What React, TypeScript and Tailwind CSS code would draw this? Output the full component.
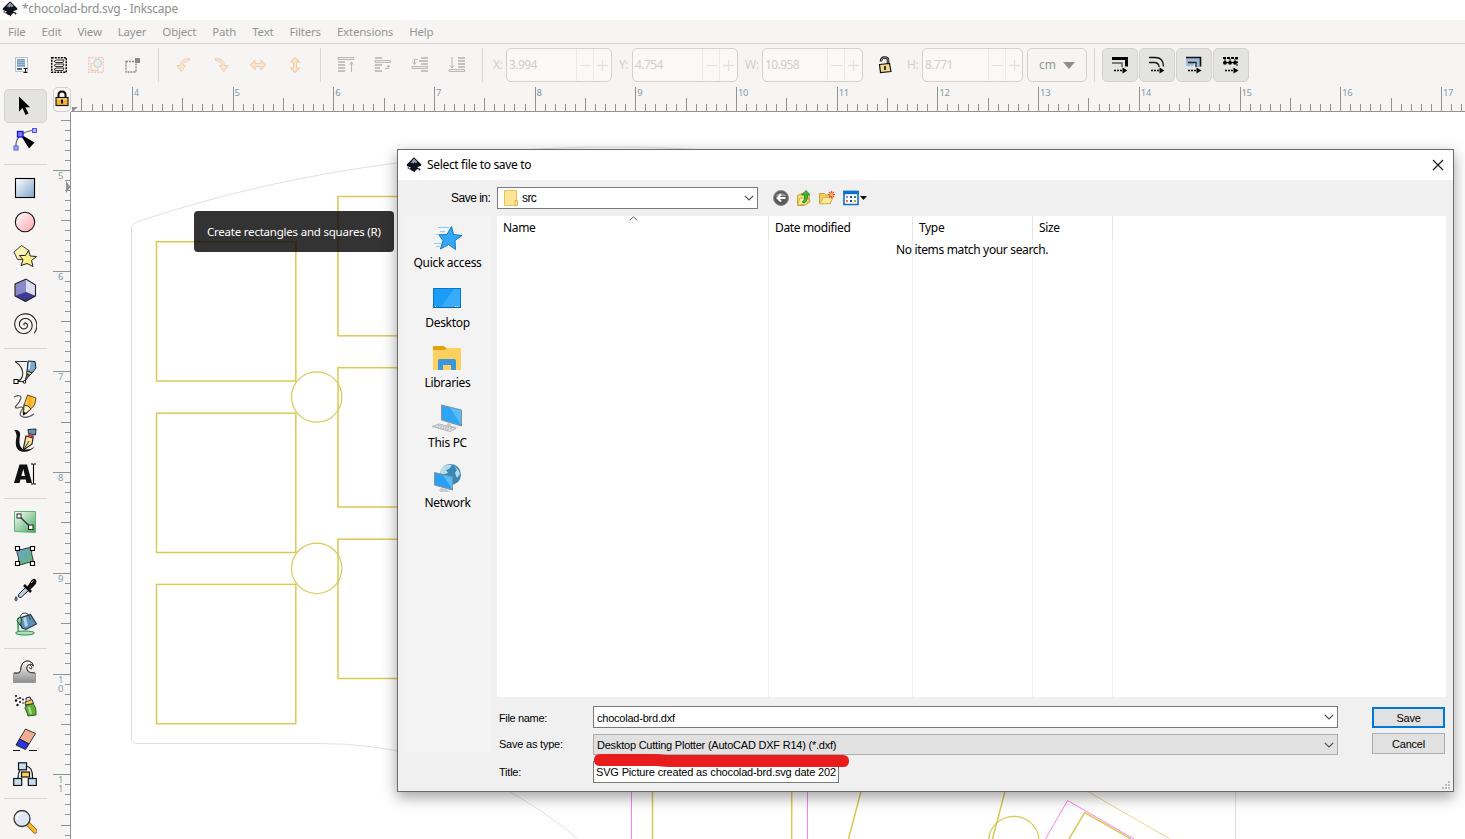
import React from "react";

type Kids = { children?: React.ReactNode };

const UI = "font-['Noto_Sans',sans-serif]";
const SYS = "font-['Liberation_Sans',sans-serif]";

function Ico({ s = 24, children }: Kids & { s?: number }) {
  return (
    <svg width={s} height={s} viewBox={`0 0 ${s} ${s}`} fill="none" className="block shrink-0">
      {children}
    </svg>
  );
}

function InkLogo() {
  return (
    <svg width="16" height="16" viewBox="0 0 16 16" className="block shrink-0">
      <path d="M8 .3 15 7q1 1.200-.4 1.900L11.500 10q-.6.600.8.900l1 .5q-.3.700-2.400.8-.4 1.400-1.700 1.600l-.7 1.700-1.300-1.500q-2-.1-2.200-1.300-2-.1-2-.9L5 10.700 1 9Q.3 8 1.200 7Z" fill="#10131a" />
      <path d="M8 1.500 11.500 5 9.800 6.300 8.400 5.300 7.200 6.700 6 5.500 4.300 6Z" fill="#8f9db5" />
      <circle cx="13.500" cy="12.600" r="1" fill="#10131a" />
      <circle cx="2.300" cy="11" r=".8" fill="#10131a" />
    </svg>
  );
}

/* ---------- command bar ---------- */

function Sep() {
  return (
    <div className="flex h-[34px] w-[14px] shrink-0 justify-center">
      <div className="h-full w-px bg-[#d9d6d3]" />
    </div>
  );
}

function Cell({ children }: Kids) {
  return <div className="flex w-[37px] shrink-0 items-center justify-center">{children}</div>;
}

function Curl({ flip }: { flip?: boolean }) {
  return (
    <Ico s={16}>
      <g transform={flip ? "matrix(-1 0 0 1 16 0)" : undefined}>
        <path d="M13.500 1.500Q5 1.500 4.500 8.500H.8L5.300 14.500 9.500 8.500H7Q7.500 4 13.500 3.500Z" fill="#fbe6d3" stroke="#f2cdab" />
      </g>
    </Ico>
  );
}

function DoubleArrow({ vertical }: { vertical?: boolean }) {
  return (
    <Ico s={16}>
      <path
        transform={vertical ? "rotate(90 8 8)" : undefined}
        d="M.5 8 5 3.500v3h6v-3L15.500 8 11 12.500v-3H5v3Z"
        fill="#fbe6d3"
        stroke="#f2cdab"
        strokeWidth="1.100"
      />
    </Ico>
  );
}

function Stack({ mode }: { mode: "top" | "up" | "down" | "bottom" }) {
  return (
    <Ico s={18}>
      <g stroke="#c3c2c0" strokeWidth="2">
        {mode === "top" && <path d="M1 6H8M1 9H8M1 12H8M1 15H8" />}
        {mode === "up" && <path d="M1 2H8M1 9H8M1 12H6M1 15H8" />}
        {mode === "down" && <path d="M10 2H17M8 5H17M10 8H17M10 15H17" />}
        {mode === "bottom" && <path d="M10 2H17M10 5H17M10 8H17M10 11H17" />}
      </g>
      <g stroke="#b9b8b6" fill="#f4eee2">
        {mode === "top" && <path d="M1 1.500H16.500V3.500H1ZM14.500 16V6.500M12.500 8.500 14.500 6 16.500 8.500" />}
        {mode === "up" && <path d="M1 4.500H16.500V6.500H1ZM11 12.500H14.500V9.500M13 11 14.500 9 16 11" />}
        {mode === "down" && <path d="M1 10.500H16.500V12.500H1ZM7 3.500H3.500V8M2 6.500 3.500 8.500 5 6.500" />}
        {mode === "bottom" && <path d="M1 13.500H16.500V15.500H1ZM4 1V11.500M2 9.500 4 12 6 9.500" />}
      </g>
    </Ico>
  );
}

function Spin({ value, wide }: { value: string; wide?: "a" | "b" | "c" }) {
  return (
    <div
      className={
        "flex h-[34px] shrink-0 items-center overflow-hidden rounded-[5px] border border-[#d5d0cc] bg-[#faf9f8] " +
        (wide === "a" ? "w-[106px]" : "w-[101px]")
      }
    >
      <span className="flex-1 pl-[2px] text-[12px] tracking-[-0.6px] text-[#d2cecb]">{value}</span>
      <span className="flex h-full w-[17px] items-center justify-center border-l border-[#edebe9]">
        <span className="h-px w-[11px] bg-[#e4e2e0]" />
      </span>
      <span className={"flex h-full items-center justify-center border-l border-[#edebe9] " + (wide === "c" ? "w-[17px]" : "w-[18px]")}>
        <svg width="11" height="11" viewBox="0 0 11 11"><path d="M0 5.500H11M5.500 0V11" stroke="#e4e2e0" strokeWidth="1.300" /></svg>
      </span>
    </div>
  );
}

function Toggle({ children }: Kids) {
  return (
    <div className="flex h-[34px] w-[36px] shrink-0 items-center justify-center rounded-[5px] border border-[#d5d0cc] bg-[#e3e4df] pb-px">
      {children}
    </div>
  );
}

function ArrowDots() {
  return (
    <g>
      <path d="M3 14.500H12" stroke="#000" strokeWidth="1.400" strokeDasharray="2 1" />
      <path d="M11.500 11.500 16.500 14.500 11.500 17.500Z" fill="#000" />
    </g>
  );
}

function CommandBar() {
  return (
    <div className="flex h-[43px] shrink-0 items-center bg-[#f6f5f4] pb-px pl-[3px]">
      <Cell>
        <Ico s={18}>
          <path d="M2.500 1.500h12v14h-12z" fill="#fdfdfd" stroke="#b9c2ca" />
          <path d="M4 3h8v8H4z" fill="#9dbbdd" />
          <path d="M4 3.500h7M4 5.500h8M4 7.500h8M4 9.500h8" stroke="#7c9fc6" />
          <path d="M4 13h5" stroke="#486d98" strokeWidth="2" />
          <path d="M10.500 12.500h4M10.500 16.500h4M12.500 12v4" stroke="#111" />
        </Ico>
      </Cell>
      <Cell>
        <Ico s={16}>
          <rect x=".75" y=".75" width="14.500" height="14.500" stroke="#000" strokeWidth="1.500" strokeDasharray="2 1" />
          <path d="M3 4.500 5 3H13L12 5.500H5ZM3 8.500 5 7H13L12 9.500H5ZM3 12.500 5 11H13L12 13.500H5Z" fill="#eee" stroke="#333" />
        </Ico>
      </Cell>
      <Cell>
        <Ico s={16}>
          <rect x=".75" y=".75" width="14.500" height="14.500" stroke="#f3c3c3" strokeWidth="1.300" strokeDasharray="2 1" />
          <rect x="3" y="6.500" width="7" height="7" fill="#fbf2d9" stroke="#d9d2c2" />
          <circle cx="9.700" cy="6.300" r="4" fill="#e8edf0" stroke="#c5cbcd" />
        </Ico>
      </Cell>
      <Cell>
        <Ico s={16}>
          <rect x="1" y="4.500" width="10" height="10.500" stroke="#888" strokeWidth="1.300" strokeDasharray="2 1" />
          <rect x="10" y="1" width="5" height="5" fill="#8a8a8a" />
        </Ico>
      </Cell>
      <Sep />
      <Cell><Curl /></Cell>
      <Cell><Curl flip /></Cell>
      <Cell><DoubleArrow /></Cell>
      <Cell><DoubleArrow vertical /></Cell>
      <Sep />
      <Cell><Stack mode="top" /></Cell>
      <Cell><Stack mode="up" /></Cell>
      <Cell><Stack mode="down" /></Cell>
      <Cell><Stack mode="bottom" /></Cell>
      <Sep />
      <span className="ml-[4px] w-[13px] text-[12px] tracking-[-0.5px] text-[#d2cecb]">X:</span>
      <Spin value="3.994" wide="a" />
      <span className="ml-[7px] w-[13px] text-[12px] tracking-[-0.5px] text-[#d2cecb]">Y:</span>
      <Spin value="4.754" wide="a" />
      <span className="ml-[7px] w-[17px] text-[12px] tracking-[-0.5px] text-[#d2cecb]">W:</span>
      <Spin value="10.958" wide="b" />
      <div className="flex w-[44px] justify-center">
        <Ico s={18}>
          <path d="M5 5.500Q5 1.500 8.500 1.500 12.500 1.500 12 5V9" stroke="#111" strokeWidth="2.600" />
          <path d="M5 5.500Q5 1.500 8.500 1.500 12.500 1.500 12 5V9" stroke="#c9c9c9" strokeWidth=".7" />
          <path d="M3.500 8.500 13.500 7.500 15 15.500 4.500 16.500Z" fill="#f0d98a" stroke="#111" strokeWidth="1.200" />
          <path d="M9 10v4" stroke="#111" strokeWidth="1.700" />
        </Ico>
      </div>
      <span className="w-[15px] text-[12px] tracking-[-0.5px] text-[#d2cecb]">H:</span>
      <Spin value="8.771" wide="c" />
      <div className="ml-1 flex h-[34px] w-[60px] items-center justify-between rounded-[5px] border border-[#d5d0cc] bg-[#f6f5f4] pr-[11px] pl-[11px]">
        <span className="text-[12px] text-[#929595]">cm</span>
        <svg width="12" height="7" viewBox="0 0 12 7"><path d="M0 0H12L6 7Z" fill="#8b8e8f" /></svg>
      </div>
      <Sep />
      <div className="ml-px flex gap-px">
        <Toggle>
          <Ico s={18}>
            <path d="M1 2.500H15.500V10.500" stroke="#000" strokeWidth="3" />
            <path d="M1 7H11V11" stroke="#555" strokeWidth="1.400" />
            <ArrowDots />
          </Ico>
        </Toggle>
        <Toggle>
          <Ico s={18}>
            <path d="M1 1.500H7Q15.500 1.500 15.500 10.500M1 6.500H6Q11 6.500 11 11" stroke="#111" strokeWidth="1.300" />
            <ArrowDots />
          </Ico>
        </Toggle>
        <Toggle>
          <Ico s={18}>
            <path d="M1 1.500H15.500V11H11V6.500H9V10H1Z" fill="#9ebbd9" />
            <path d="M1 1.500H15.500V10.500" stroke="#111" strokeWidth="1.600" />
            <path d="M3 6.500H11V11" stroke="#222" strokeWidth="1.300" />
            <ArrowDots />
          </Ico>
        </Toggle>
        <Toggle>
          <Ico s={18}>
            <path d="M1 2H16" stroke="#000" strokeWidth="2" strokeDasharray="3 1" />
            <path d="M3 3V6M8 3V6M13 3V6" stroke="#000" />
            <path d="M1 6.500H16" stroke="#000" strokeWidth="1.200" />
            <g fill="#000"><circle cx="3" cy="6.800" r="1.900" /><circle cx="8" cy="6.800" r="1.900" /><circle cx="13" cy="6.800" r="1.900" /></g>
            <path d="M15 2V10" stroke="#000" strokeDasharray="2 1" />
            <ArrowDots />
          </Ico>
        </Toggle>
      </div>
    </div>
  );
}

/* ---------- toolbox ---------- */

function Tool({ active, children }: Kids & { active?: boolean }) {
  return (
    <div
      className={
        "flex h-[34px] w-[43px] shrink-0 items-center justify-center rounded-[5px] border pr-px " +
        (active ? "border-[#d5d0cc] bg-[#e3e4df]" : "border-transparent")
      }
    >
      {children}
    </div>
  );
}

function ToolSep() {
  return (
    <div className="flex h-[14px] w-[43px] shrink-0 items-center">
      <div className="h-px w-full bg-[#d9d6d3]" />
    </div>
  );
}

function spiralPath() {
  const steps = 90;
  const turns = 2.7;
  const pts: string[] = [];
  for (let i = 0; i <= steps; i++) {
    const t = i / steps;
    const a = 0.72 - t * turns * 2 * Math.PI;
    const r = 12.8 * (1 - t);
    pts.push(`${(11.600 + r * Math.cos(a)).toFixed(2)} ${(12.800 + r * Math.sin(a)).toFixed(2)}`);
  }
  return "M" + pts.join("L");
}

function Toolbox() {
  return (
    <div className="flex w-[53px] shrink-0 flex-col bg-[#f6f5f4] pt-[2px] pl-[4px]">
      <svg width="0" height="0" className="absolute">
        <defs>
          <linearGradient id="blue" x1="0" y1="0" x2="1" y2="1"><stop stopColor="#fff" /><stop offset="1" stopColor="#7fa6cc" /></linearGradient>
          <linearGradient id="pink" x1="0" y1="0" x2="1" y2="1"><stop stopColor="#fff" /><stop offset="1" stopColor="#ffa3ac" /></linearGradient>
          <linearGradient id="green" x1="0" y1="0" x2="1" y2="1"><stop stopColor="#fff" /><stop offset="1" stopColor="#42a85c" /></linearGradient>
          <linearGradient id="steel" x1="0" y1="0" x2="0" y2="1"><stop stopColor="#fff" /><stop offset="1" stopColor="#8c8c8c" /></linearGradient>
          <linearGradient id="mesh" x1="0" y1="0" x2="1" y2="1"><stop stopColor="#6f9fd0" /><stop offset="1" stopColor="#5cba74" /></linearGradient>
          <linearGradient id="gold" x1="0" y1="0" x2="1" y2="0"><stop stopColor="#fff2a8" /><stop offset=".5" stopColor="#f8a81c" /><stop offset="1" stopColor="#f6dc62" /></linearGradient>
        </defs>
      </svg>
      <Tool active>
        <Ico><path d="M6 2.500V17.500L9.500 14 12.500 21 15.500 19.500 12.300 13.200H17Z" fill="#000" /></Ico>
      </Tool>
      <Tool>
        <Ico>
          <path d="M3 19Q2 5 21 2" stroke="#666" strokeWidth="1.200" />
          <path d="M7 6 21.500 14.500 16 20.500Z" fill="#000" />
          <rect x="4.500" y="3.500" width="5.500" height="5.500" fill="#7a7af5" stroke="#1414e6" strokeWidth="1.300" />
          <rect x="1" y="18" width="4" height="4" fill="#aab2ff" stroke="#5252f0" />
          <rect x="19.500" y=".5" width="4" height="4" fill="#aab2ff" stroke="#5252f0" />
        </Ico>
      </Tool>
      <ToolSep />
      <Tool><Ico><rect x="2.500" y="2.500" width="19" height="19" fill="url(#blue)" stroke="#000" strokeWidth="1.100" /></Ico></Tool>
      <Tool><Ico><circle cx="12" cy="12" r="9.700" fill="url(#pink)" stroke="#111" strokeWidth="1.100" /></Ico></Tool>
      <Tool>
        <Ico>
          <path d="M8.500 1.500 16 6.500 13 15.500H4.500L1 8Z" fill="#fbf3b4" stroke="#444" />
          <path d="M15.500 6.500 17.200 12 23.500 12.500 18.500 16.500 20 22.500 14 19.500 8 21.500 10 15.800 6.500 11.500 12.500 11.500Z" fill="#fdf08a" stroke="#222" strokeLinejoin="round" />
        </Ico>
      </Tool>
      <Tool>
        <Ico>
          <path d="M2 6 13 1 22.500 7V18L12.500 23.500 2 18Z" fill="#6d6dae" />
          <path d="M2 6 13 1V14L2 18Z" fill="#8a8acb" />
          <path d="M13 1 22.500 7V18L13 14Z" fill="#dcdcf3" />
          <path d="M2 18 13 14 22.500 18 12.500 23.500Z" fill="#3c3c94" />
          <path d="M2 6 13 1 22.500 7V18L12.500 23.500 2 18Z" stroke="#222" strokeWidth="1.100" />
        </Ico>
      </Tool>
      <Tool>
        <Ico><path d={spiralPath()} stroke="#222" strokeWidth="1.100" /></Ico>
      </Tool>
      <ToolSep />
      <Tool>
        <Ico>
          <path d="M2 1.500H14M2 1.500Q11 7 9.500 16 8 21 3 21.500H11" stroke="#333" strokeWidth="1.100" />
          <path d="M15 1 22 1.500 23 8 19 13 14 11Z" fill="#79a9cf" stroke="#16242f" />
          <path d="M17 2 16 9" stroke="#e6f3fb" strokeWidth="1.500" />
          <path d="M14 11 19 13 17 15 13.500 13.500Z" fill="#f4e08c" stroke="#222" />
          <path d="M14 14 16.500 15.500 12 21Z" fill="#777" stroke="#222" />
          <rect x="1" y="19.500" width="4" height="4" fill="#fff" stroke="#000" />
          <circle cx="11.500" cy="22" r="1.300" fill="#fff" stroke="#000" />
        </Ico>
      </Tool>
      <Tool>
        <Ico>
          <path d="M1 3Q8 0 8 4 7 8 3 12 1 14 5 14 9 12 10 14 5 21 9 22.500 14 25 21 20" stroke="#555" strokeWidth="1.200" />
          <path d="M14.500 1 23 4 21.500 11 13 20 10 19.500 11 11Z" fill="url(#gold)" stroke="#6b4a0c" />
          <path d="M11 11 15 12 18 15 10.500 21Z" fill="#fdf4c8" stroke="#333" />
          <path d="M10.300 17.500 13 19 10 21.500Z" fill="#111" />
        </Ico>
      </Tool>
      <Tool>
        <Ico>
          <path d="M1 2Q8 1 7 8 5 18 10 21 16 23 22 18.500 15 26 7 23 1 20 3.500 9 4 4 1 2Z" fill="#111" />
          <path d="M13 8 20 10 19 16 11 21.500 10.500 20Z" fill="#fbe29d" stroke="#222" strokeWidth="1.200" />
          <path d="M15 6.800 21 8.800" stroke="#d3332e" strokeWidth="2" />
          <path d="M15 1.500 23 1 22.500 7 15.500 5.500Z" fill="#6195be" stroke="#1c2c3a" />
          <path d="M11 21 16 13" stroke="#333" />
        </Ico>
      </Tool>
      <Tool>
        <Ico>
          <path d="M1 21 6.500 2.500H14L19 21H13.500L12.800 17.500H7.500L6.500 21ZM8.300 14H12L10.300 7Z" fill="#111" fillRule="evenodd" />
          <path d="M18 2H20Q20.500 2 20.500 3V21Q20.500 22 20 22H18M23 2H21M23 22H21" stroke="#000" strokeWidth="1.100" />
        </Ico>
      </Tool>
      <ToolSep />
      <Tool>
        <Ico>
          <path d="M1.500 1.500H22.500V22.500L1.500 21.500Z" fill="url(#green)" stroke="#5fb374" />
          <path d="M6 6 17.500 17" stroke="#333" strokeWidth="1.300" />
          <rect x="4" y="4" width="4" height="4" fill="#fff" stroke="#222" />
          <rect x="15.500" y="15" width="4.500" height="4.500" fill="#fff" stroke="#222" />
        </Ico>
      </Tool>
      <Tool>
        <Ico>
          <path d="M4.500 4.500C9 8 15 1.500 19.500 4.500 16.500 10 22 15 19.500 19.500 14 16 10 23 4.500 19.500 8 14 2 9 4.500 4.500Z" fill="url(#mesh)" stroke="#333" />
          <path d="M2.500 2.500h4v4h-4zM17.500 2.500h4v4h-4zM2.500 17.500h4v4h-4zM17.500 17.500h4v4h-4z" fill="#fff" stroke="#000" strokeWidth="1.100" />
        </Ico>
      </Tool>
      <Tool>
        <Ico>
          <path d="M13 9 16 12 8 19.500 5.500 19 5.500 16.500Z" fill="#b9d1e6" stroke="#222" />
          <path d="M11 7 18 14" stroke="#000" strokeWidth="2.600" />
          <path d="M14 9 18 3Q21-1 23 2 24.500 5 21 8L17 12Z" fill="#111" />
          <path d="M18 5 20.500 2.500" stroke="#aaa" />
          <path d="M3 18.500Q5.500 22 3 23 .8 22 3 18.500Z" fill="#668bb0" stroke="#334" strokeWidth=".8" />
        </Ico>
      </Tool>
      <Tool>
        <Ico>
          <path d="M5.500 7Q4.500 12 5.500 20" stroke="#56b074" strokeWidth="2" />
          <ellipse cx="12" cy="21" rx="9.500" ry="2" fill="#aee2b8" stroke="#2f8a4e" />
          <path d="M5 6.500 17.500 2.500 23.500 12 13 17.500 9 16Z" fill="#5e91b8" stroke="#1d3140" strokeWidth="1.100" />
          <path d="M10 6 12 15 15 13.500 13 5Z" fill="#b4d2e4" />
          <path d="M7 5Q9-1 15 2L17.500 8" stroke="#444" />
          <path d="M4 8.500 6.500 5 8.500 7 7.500 14Z" fill="#7ed091" stroke="#222" strokeWidth=".8" />
        </Ico>
      </Tool>
      <ToolSep />
      <Tool>
        <Ico>
          <path d="M.5 22.500V13H6Q8 11 8 7 10 0 16 1 20 2 20.500 6 18 2.500 15 5 12.500 8 15 11 17 13 22.500 13V22.500Z" fill="url(#steel)" stroke="#999" />
          <path d="M1 13H6Q8 11 8 7 10 0 16 1 20 2 20.500 6 18 3 15 5 12 8 15 11.500 17 13 22 13" stroke="#333" />
          <path d="M17 5Q20 7 18.500 9 16 9 16.500 7" stroke="#444" />
        </Ico>
      </Tool>
      <Tool>
        <Ico>
          <path d="M13 11 20 9.500Q23.500 13 23 21L15 22Q14 18 12 14Z" fill="#64ad38" stroke="#2f6417" />
          <path d="M16 13 18 20" stroke="#b8e39a" strokeWidth="2" />
          <path d="M12 8 19 5.500 20.500 9.500 12.500 11Z" fill="#f3c95b" stroke="#333" />
          <path d="M13 6.500V4L17 3 18 6" fill="#ddd" stroke="#222" />
          <g fill="#111"><circle cx="3" cy="2" r="1.100" /><circle cx="7" cy="4" r="1" /><circle cx="3" cy="6.500" r="1.200" /><circle cx="7" cy="8" r="1" /><circle cx="4.500" cy="11" r="1.200" /><circle cx="10" cy="5.500" r=".9" /><circle cx="10" cy="9" r=".8" /><circle cx="5" cy="4.500" r=".7" /></g>
        </Ico>
      </Tool>
      <Tool>
        <Ico>
          <path d="M12.500 1 22.500 5.500 16 16 6.500 11Z" fill="#f1ae94" stroke="#333" />
          <path d="M6.500 11 16 16 12.500 21.500 3 17Z" fill="#2b35e0" stroke="#222" />
          <path d="M0 22.500H7M16 22.500H24" stroke="#111" strokeWidth="1.100" />
        </Ico>
      </Tool>
      <Tool>
        <Ico>
          <path d="M7 8Q5 11 5 16M13 4Q20 5 19.500 16" stroke="#111" strokeWidth="1.200" />
          <rect x="5.500" y=".8" width="8" height="7" fill="#c8dcef" stroke="#111" strokeWidth="1.200" />
          <rect x="8.500" y="10" width="8" height="5" fill="#fbd04c" stroke="#111" strokeWidth="1.200" />
          <rect x=".7" y="16.500" width="8" height="7" fill="#c8dcef" stroke="#111" strokeWidth="1.200" />
          <rect x="15.300" y="16.500" width="8" height="7" fill="#c8dcef" stroke="#111" strokeWidth="1.200" />
        </Ico>
      </Tool>
      <ToolSep />
      <Tool>
        <Ico>
          <path d="M15.500 14.500 22 21" stroke="#8a5a10" strokeWidth="5" strokeLinecap="round" />
          <path d="M16 15 22 21" stroke="#f8b632" strokeWidth="3.600" strokeLinecap="round" />
          <circle cx="9" cy="8.500" r="8" fill="#dce7f2" stroke="#333" strokeWidth="1.300" />
          <path d="M4 9Q4 4 9 3.500" stroke="#fff" strokeWidth="2" />
        </Ico>
      </Tool>
    </div>
  );
}

/* ---------- rulers ---------- */

const STEP = 100.7;

function TopRuler() {
  const ticks: React.ReactNode[] = [];
  for (let i = -5; i < 134; i++) {
    const x = Math.floor(132.3 - 71 + (i * STEP) / 10) + 0.5;
    const top = i % 10 === 0 ? 0 : Math.abs(i % 10) === 5 ? 11 : 17;
    ticks.push(<path key={i} d={`M${x} ${top}V24`} stroke="#8f9293" />);
  }
  return (
    <svg width="1394" height="25" className="block shrink-0 bg-[#f6f5f4]">
      {ticks}
      <path d="M0 24.500H1394" stroke="#8f9293" />
      <path d="M1 20H7L2 24.500H1Z" fill="#8f9293" />
      {Array.from({ length: 14 }, (_, n) => (
        <text key={n} x={62.800 + n * STEP} y="9" fontSize="9.500" letterSpacing="-0.4" fill="#8798a8" className={UI}>
          {n + 4}
        </text>
      ))}
    </svg>
  );
}

function SideRuler() {
  const ticks: React.ReactNode[] = [];
  for (let i = -5; i < 67; i++) {
    const y = Math.floor(170.500 - 112 + (i * STEP) / 10) + 0.5;
    const left = i % 10 === 0 ? 0 : Math.abs(i % 10) === 5 ? 8 : 12;
    ticks.push(<path key={i} d={`M${left} ${y}H17`} stroke="#8f9293" />);
  }
  return (
    <svg width="18" height="727" className="block shrink-0 bg-[#f6f5f4]">
      {ticks}
      <path d="M17.500 0V727" stroke="#8f9293" />
      <path d="M13 69 17.500 75 13 81Z" fill="#8f9293" />
      {Array.from({ length: 7 }, (_, n) =>
        String(n + 5).split("").map((d, k) => (
          <text key={`${n}-${k}`} x="5" y={67 + n * STEP + k * 9} fontSize="9.500" fill="#8798a8" className={UI}>
            {d}
          </text>
        ))
      )}
    </svg>
  );
}

function LockBox() {
  return (
    <div className="flex h-[25px] w-[18px] shrink-0 items-center justify-center rounded-[4px] border border-[#d5d0cc] bg-[#f6f5f4] pb-[2px]">
      <svg width="14" height="17" viewBox="0 0 14 17" className="block shrink-0" fill="none">
        <path d="M3.500 8V5Q3.500 1.500 7 1.500 10.500 1.500 10.500 5V8" stroke="#111" strokeWidth="2" />
        <rect x="1" y="7.500" width="12" height="8" fill="#f2b430" stroke="#111" strokeWidth="1.100" />
        <path d="M2 9H12" stroke="#fae08a" />
        <path d="M7 9.500V13.500" stroke="#111" strokeWidth="2" />
      </svg>
    </div>
  );
}

/* ---------- drawing canvas ---------- */

function Drawing() {
  return (
    <svg width="1394" height="727" viewBox="71 112 1394 727" className="block bg-white" fill="none">
      <g stroke="#e1e1e1">
        <path d="M508 791Q420 743.500 320 743.500H138Q131.500 743.500 131.500 738V229Q131.500 224 138 221.500 262 180 397 163 520 146 620 147 680 147 722 152M508 791Q545 811 578 839M1235.500 791V839" />
      </g>
      <g stroke="#d9c954" strokeWidth="1.500">
        <rect x="156.500" y="241.700" width="139.300" height="139.300" />
        <rect x="156.500" y="413.200" width="139.300" height="139.300" />
        <rect x="156.500" y="584.400" width="139.300" height="139.300" />
        <rect x="338" y="196.500" width="139.300" height="139.300" />
        <rect x="338" y="367.700" width="139.300" height="139.300" />
        <rect x="338" y="539.200" width="139.300" height="139.300" />
        <circle cx="316.700" cy="397" r="25.200" strokeWidth="1.200" />
        <circle cx="316.700" cy="568.300" r="25.200" strokeWidth="1.200" />
        <path d="M652.500 780V839M791.700 780V839M864 780 848.500 839M1008 780 992.500 839M1069 839 1084.700 812.500 1131 839" />
        <circle cx="1013.800" cy="841.500" r="25.200" strokeWidth="1.200" />
        <path d="M1080 787 1170 839" strokeWidth=".7" />
      </g>
      <path d="M631.500 780V839M807.500 780V839M1045.500 839 1067.600 800.500 1134 839" stroke="#ff80f0" />
    </svg>
  );
}

/* ---------- save dialog ---------- */

function Place({ label, children }: Kids & { label: string }) {
  return (
    <div className="flex h-[60px] w-full flex-col items-center">
      <div className="flex h-[32px] items-center pr-[2px]">{children}</div>
      <span className="mt-px text-[12px] leading-[16px] tracking-[-0.3px]">{label}</span>
    </div>
  );
}

function Places() {
  return (
    <div className="flex h-[536px] w-[87px] shrink-0 flex-col items-center bg-[#f3f3f3] pt-[6px]">
      <Place label="Quick access">
        <Ico s={32}>
          <path d="M7 5.500H18M9 9.500H14M5 12.500H11M3 21.500H10M5 24.500H9" stroke="#8ccdf5" />
          <path d="M20.500 4.500 22.500 12.500 31 13.500 24 18.500 24.500 27.500 17.500 22.500 9.500 27 12 18.500 8 13 16 12.500Z" fill="#35a8f5" stroke="#0b78c8" />
        </Ico>
      </Place>
      <Place label="Desktop">
        <Ico s={32}>
          <rect x="2.500" y="6.500" width="27" height="19" fill="#1b9df8" stroke="#0874c4" />
          <path d="M29 7V25H10L23 7Z" fill="#38acfb" />
          <path d="M3 25.500H29" stroke="#0b65ab" />
          <path d="M4 24.500H5M24 24.500H25M26 24.500H27" stroke="#fff" />
        </Ico>
      </Place>
      <Place label="Libraries">
        <Ico s={32}>
          <path d="M2 4H13L15 6H30V28H2Z" fill="#e0a10c" />
          <path d="M2 8H14L16 6H30V28H2Z" fill="#fed05d" />
          <path d="M7 28V19Q7 17 9 17H23Q25 17 25 19V28H20V23H12V28Z" fill="#3b96df" />
        </Ico>
      </Place>
      <Place label="This PC">
        <Ico s={32}>
          <path d="M10.500 3 30.500 8V24L10.500 18Z" fill="#2ea4f5" stroke="#84939b" />
          <path d="M19 5.500 30 8.500V23Z" fill="#58bbfb" />
          <path d="M17 21 20 22V24L27 25 22 26.500 14 24.500Z" fill="#c6cbce" />
          <path d="M1 24.500 8 22 25 26.500 19 29.500Z" fill="#e3e5e6" stroke="#a3a8ab" strokeWidth=".8" />
          <path d="M4 24.500 18 28M7 23.500 21 27" stroke="#a3a8ab" strokeDasharray="1.500 1" />
        </Ico>
      </Place>
      <Place label="Network">
        <Ico s={32}>
          <circle cx="19.500" cy="12.500" r="10.500" fill="#3a86b5" />
          <path d="M12 5Q16 2 21 3L18 7 15 8 17 11 10 13 9 9ZM23 4Q28 7 29 12L26 16 24 11 26 8Z" fill="#b9dcea" />
          <path d="M3.500 10.500 21.500 15V28L3.500 23Z" fill="#29a0f3" stroke="#7d9099" />
          <path d="M12 13 21 15.500V27Z" fill="#5bbcfb" />
          <path d="M10 26 16 27.500 19 30H10L8 28.500Z" fill="#c6cbce" />
        </Ico>
      </Place>
    </div>
  );
}

function Chevron() {
  return (
    <svg width="10" height="6" viewBox="0 0 10 6" fill="none" className="block shrink-0">
      <path d="M.8.800 5 5 9.200.800" stroke="#505050" strokeWidth="1.200" />
    </svg>
  );
}

function Column({ w, title }: { w: string; title: string }) {
  return (
    <div className={"flex h-full shrink-0 flex-col " + w}>
      <div className="flex h-[24px] items-center border-r border-[#e5e5e5] pl-[6px] text-[12px] tracking-[-0.35px]">{title}</div>
      <div className="flex-1 border-r border-[#e8f1fa]" />
    </div>
  );
}

function SaveDialog() {
  return (
    <div className={"absolute top-[149px] left-[397px] flex h-[643px] w-[1057px] flex-col border border-[#6b6b6b] bg-[#f0f0f0] text-black shadow-[0_5px_14px_rgba(0,0,0,0.38)] " + UI}>
      <div className="flex h-[30px] shrink-0 items-center bg-white pr-[9px] pl-[8px]">
        <InkLogo />
        <span className="ml-[5px] flex-1 text-[12px] tracking-[-0.33px]">Select file to save to</span>
        <svg width="12" height="12" viewBox="0 0 12 12" className="mb-px"><path d="M1 1 11 11M11 1 1 11" stroke="#111" strokeWidth="1.100" /></svg>
      </div>

      <div className="flex h-[36px] shrink-0 items-center pl-[53px]">
        <span className={"w-[46px] text-[12px] tracking-[-0.5px] " + SYS}>Save in:</span>
        <div className="flex h-[22px] w-[261px] items-center border border-[#7a7a7a] bg-white pr-[3px] pl-[6px]">
          <svg width="14" height="16" viewBox="0 0 14 16" fill="none">
            <path d="M.5.500H12.500V15.500H.5Z" fill="#ffe493" stroke="#e9c35a" />
            <path d="M11 10.500H13.500V15.500H11Z" fill="#ffe493" stroke="#e0b544" />
          </svg>
          <span className={"ml-[4px] flex-1 text-[12px] tracking-[-0.6px] " + SYS}>src</span>
          <Chevron />
        </div>
        <div className="ml-[15px] flex items-center gap-[7px]">
          <Ico s={16}>
            <circle cx="8" cy="8" r="7.500" fill="#5a5a5a" stroke="#8c8c8c" />
            <path d="M2 6Q8 0 14 6Z" fill="#999" />
            <path d="M12.500 8H5M8 4.500 4.500 8 8 11.500" stroke="#fff" strokeWidth="2" />
          </Ico>
          <Ico s={16}>
            <path d="M1.500 5.500 6 3.500H12.500L14 12 8 15.500H1.500Z" fill="#f8dc7c" stroke="#cf9f31" />
            <path d="M1.500 15 4 8H13L11 14Z" fill="#fdeea9" stroke="#d9ae45" />
            <path d="M6 12Q9 11 8.500 5H5.500L10 .500 14 5H11.500Q12 11 8 13Z" fill="#3eb53a" stroke="#16801a" strokeWidth=".8" />
          </Ico>
          <Ico s={16}>
            <path d="M.5 3.500H5L7 5H11.500V13.500H.5Z" fill="#f5cf63" stroke="#cf9f31" />
            <path d="M1 14 4 7.500H14L11 13.500Z" fill="#fdeaa0" stroke="#d9ae45" />
            <path d="M12.500 1V8.500M9 4.500H16M10 2 15 7M15 2 10 7" stroke="#f0502a" strokeWidth="1.200" />
            <circle cx="12.500" cy="4.500" r="1.600" fill="#ffc46a" />
          </Ico>
          <div className="ml-px flex items-center gap-px">
            <Ico s={16}>
              <path d="M1 1.500H15V14.500H1Z" fill="#fff" stroke="#0f6fd0" strokeWidth="1.600" />
              <path d="M.3 2.500H15.700" stroke="#0f6fd0" strokeWidth="3.400" />
              <path d="M3 11H5" stroke="#ef6a57" strokeWidth="2" />
              <path d="M3 7H5" stroke="#8d8dbd" strokeWidth="2" />
              <path d="M7 7H9M7 11H9" stroke="#1c4fa8" strokeWidth="2" />
              <path d="M11 7H13" stroke="#2a9a3c" strokeWidth="2" />
              <path d="M11 11H13" stroke="#d0a31c" strokeWidth="2" />
            </Ico>
            <svg width="7" height="4" viewBox="0 0 7 4"><path d="M0 0H7L3.500 4Z" fill="#111" /></svg>
          </div>
        </div>
      </div>

      <div className="flex gap-[6px] pl-[6px]">
        <Places />
        <div className="flex w-[949px] flex-col">
          <div className="relative flex h-[481px] bg-white">
            <Column w="w-[272px]" title="Name" />
            <Column w="w-[144px]" title="Date modified" />
            <Column w="w-[120px]" title="Type" />
            <Column w="w-[80px]" title="Size" />
            <svg width="9" height="5" viewBox="0 0 9 5" fill="none" className="absolute top-0 left-[132px]">
              <path d="M.8 4.200 4.500.800 8.200 4.200" stroke="#666" />
            </svg>
            <span className="absolute top-[26px] left-[399px] text-[12px] leading-[16px] tracking-[-0.35px] whitespace-nowrap">No items match your search.</span>
          </div>

          <div className={"flex pt-[9px] text-[11px] tracking-[-0.22px] " + SYS}>
            <div className="flex w-[841px] shrink-0 flex-col">
              <div className="flex items-center">
                <span className="w-[96px] pt-[2px] pl-[2px] tracking-[-0.35px]">File name:</span>
                <div className="flex h-[22px] w-[745px] items-center justify-between border border-[#7a7a7a] bg-white pr-[3px] pl-[3px]">
                  <span className="pt-[2px]">chocolad-brd.dxf</span>
                  <Chevron />
                </div>
              </div>
              <div className="mt-[6px] flex items-center">
                <span className="w-[96px] pl-[2px]">Save as type:</span>
                <div className="flex h-[21px] w-[745px] items-center justify-between border border-[#adadad] bg-[#e1e1e1] pr-[3px] pl-[3px]">
                  <span className="pt-px">Desktop Cutting Plotter (AutoCAD DXF R14) (*.dxf)</span>
                  <Chevron />
                </div>
              </div>
              <div className="relative mt-[6px] flex items-center">
                <span className="w-[96px] pl-[2px]">Title:</span>
                <div className="flex h-[22px] w-[246px] items-center border border-[#7a7a7a] bg-white pl-[2px] whitespace-nowrap">
                  <span className="tracking-[-0.16px]">SVG Picture created as chocolad-brd.svg date 202</span>
                </div>
                <svg width="256" height="14" viewBox="0 0 256 14" className="absolute -top-[7px] left-[97px]">
                  <path d="M6 0H60Q66 0 72 1H249Q255 1.500 255 7 255 13 249 13H80Q70 13 64 12H6Q0 12 0 6 0 0 6 0Z" fill="#e81c1c" />
                </svg>
              </div>
            </div>
            <div className="ml-[34px] flex w-[73px] flex-col gap-[5px] pt-px">
              <div className="flex h-[21px] items-center justify-center border-2 border-[#0078d7] bg-[#e1e1e1] pt-px">Save</div>
              <div className="flex h-[21px] items-center justify-center border border-[#adadad] bg-[#e1e1e1] pt-px">Cancel</div>
            </div>
          </div>
        </div>
      </div>
      <svg width="8" height="8" viewBox="0 0 8 8" className="absolute right-[3px] bottom-[2px]">
        <path d="M6 0h2v2H6zM3 3h2v2H3zM6 3h2v2H6zM0 6h2v2H0zM3 6h2v2H3zM6 6h2v2H6z" fill="#bcbcbc" />
      </svg>
    </div>
  );
}

const MENUS = ["File", "Edit", "View", "Layer", "Object", "Path", "Text", "Filters", "Extensions", "Help"];

export default function App() {
  return (
    <div className={"relative flex h-[839px] w-[1465px] flex-col overflow-hidden bg-white " + UI}>
      <div className="flex h-[20px] shrink-0 items-center bg-white pb-[2px] pl-[2px]">
        <InkLogo />
        <span className="ml-[4px] text-[12px] leading-none tracking-[-0.27px] text-[#8e8e8e]">*chocolad-brd.svg - Inkscape</span>
      </div>
      <div className="flex h-[24px] shrink-0 items-center gap-[16px] border-b border-[#d9d6d3] bg-[#f6f5f4] pl-[8px] text-[11.5px] tracking-[-0.2px] text-[#929595]">
        {MENUS.map((m) => (
          <span key={m}>{m}</span>
        ))}
      </div>
      <CommandBar />
      <div className="flex min-h-0 flex-1">
        <Toolbox />
        <div className="flex flex-col">
          <div className="flex">
            <LockBox />
            <TopRuler />
          </div>
          <div className="flex">
            <SideRuler />
            <Drawing />
          </div>
        </div>
      </div>

      <div className="absolute top-[211px] left-[194px] flex h-[41px] w-[200px] items-center rounded-[4px] bg-black/80 pl-[13px] text-[11.5px] tracking-[-0.22px] whitespace-nowrap text-white">
        Create rectangles and squares (R)
      </div>
      <SaveDialog />
    </div>
  );
}
